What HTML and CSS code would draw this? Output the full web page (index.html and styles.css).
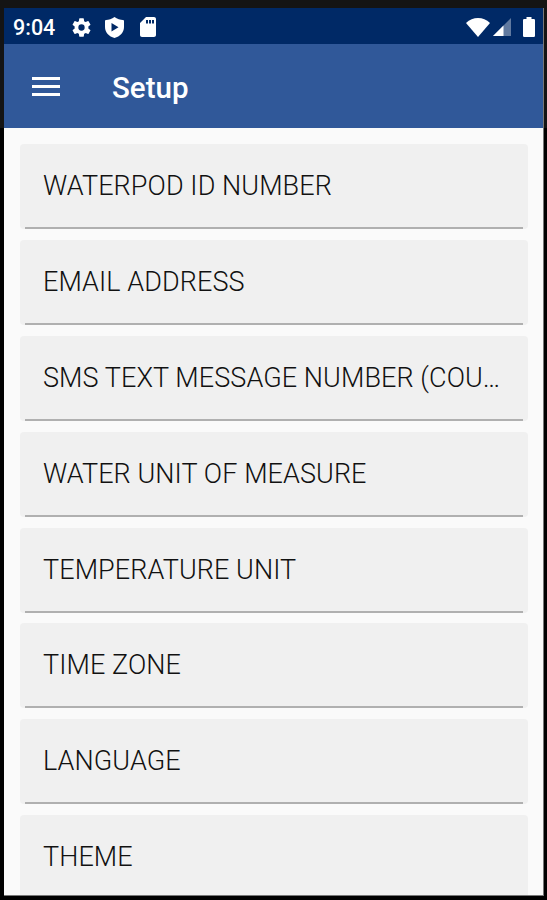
FILE: index.html
```
<!DOCTYPE html>
<html lang="en">
<head>
    <meta charset="UTF-8">
    <meta name="viewport" content="width=device-width, initial-scale=1.0">
    <title>Setup</title>
    <link rel="stylesheet" href="styles.css">
</head>
<body>
    <div class="screen">
        <!-- Status Bar -->
        <div class="status-bar">
            <span class="clock">9:04</span>
            <svg class="icon settings" viewBox="0 0 24 24"><path fill-rule="evenodd" d="M19.14 12.94c.04-.3.06-.61.06-.94s-.02-.64-.07-.94l2.03-1.58a.49.49 0 0 0 .12-.61l-1.92-3.32a.49.49 0 0 0-.59-.22l-2.39.96a7 7 0 0 0-1.62-.94l-.36-2.54a.48.48 0 0 0-.48-.41h-3.84a.48.48 0 0 0-.47.41l-.36 2.54c-.59.24-1.13.57-1.62.94l-2.39-.96a.48.48 0 0 0-.59.22L2.74 8.87a.48.48 0 0 0 .12.61l2.03 1.58a6 6 0 0 0 0 1.88l-2.03 1.58a.49.49 0 0 0-.12.61l1.92 3.32c.12.22.37.29.59.22l2.39-.96c.5.38 1.03.7 1.62.94l.36 2.54c.05.24.24.41.48.41h3.84c.24 0 .44-.17.47-.41l.36-2.54a7 7 0 0 0 1.62-.94l2.39.96c.22.08.47 0 .59-.22l1.92-3.32a.48.48 0 0 0-.12-.61zM12 15.3a3.3 3.3 0 1 1 0-6.6 3.3 3.3 0 0 1 0 6.6z"/></svg>
            <svg class="icon shield" viewBox="0 0 19 21"><path fill-rule="evenodd" d="M9.5 0C7 2 3.500 3 1 3Q0 3 0 4V10C0 15.500 4 19.500 9.500 21C15 19.500 19 15.500 19 10V4Q19 3 18 3C15.500 3 12 2 9.500 0zM6.500 6V14.500L13.500 10.300z"/></svg>
            <svg class="icon sd-card" viewBox="0 0 16 20"><path fill-rule="evenodd" d="M14 0H6L0 6v12c0 1.100.9 2 2 2h12c1.100 0 2-.9 2-2V2c0-1.100-.9-2-2-2zM6 3h2v3.500H6zm3 0h2v3.500H9zm3 0h2v3.500h-2z"/></svg>
            <div class="status-right">
                <svg class="icon wifi" viewBox="0 0 24 19"><path d="M12 19L0 5C3.500 1.700 7.500 0 12 0s8.500 1.700 12 5z"/></svg>
                <svg class="icon signal" viewBox="0 0 18 18"><path d="M18 0v18H0z" opacity=".38"/><path d="M10.500 7.500V18H0z"/></svg>
                <svg class="icon battery" viewBox="0 0 12 20"><path d="M10.800 2H8.500V0h-5v2H1.200Q0 2 0 3.200v15.600Q0 20 1.200 20h9.600q1.200 0 1.200-1.200V3.200Q12 2 10.800 2z"/></svg>
            </div>
        </div>

        <!-- App Bar -->
        <header class="app-bar">
            <div class="menu">
                <span></span>
                <span></span>
                <span></span>
            </div>
            <h1>Setup</h1>
        </header>

        <!-- Settings List -->
        <div class="list">
            <div class="item"><p>WATERPOD ID NUMBER</p></div>
            <div class="item"><p>EMAIL ADDRESS</p></div>
            <div class="item"><p>SMS TEXT MESSAGE NUMBER (COU…</p></div>
            <div class="item"><p>WATER UNIT OF MEASURE</p></div>
            <div class="item"><p>TEMPERATURE UNIT</p></div>
            <div class="item"><p>TIME ZONE</p></div>
            <div class="item"><p>LANGUAGE</p></div>
            <div class="item"><p>THEME</p></div>
        </div>
    </div>
</body>
</html>
```
FILE: styles.css
```
/* General Reset */
* {
    box-sizing: border-box;
}

body {
    margin: 0;
    height: 100vh;
    padding: 8px 3px 4px 4px;
    font-family: Roboto, sans-serif;
    background: linear-gradient(#141414 128px, #000 128px);
    overflow: hidden;
}

.screen {
    display: flex;
    flex-direction: column;
    height: 100%;
    background: #fafafa;
    border-right: 1px solid #777;
    border-bottom: 1px solid #777;
    overflow: hidden;
}

/* Status Bar */
.status-bar {
    display: flex;
    align-items: center;
    flex: 0 0 36px;
    padding: 2px 8px 0 9px;
    background: #002966;
    color: #fff;
}

.clock {
    width: 57px;
    padding-top: 1px;
    font-size: 21.5px;
    font-weight: 500;
    line-height: 33px;
}

.icon {
    display: block;
    fill: #fff;
}

.settings {
    width: 23px;
    height: 23px;
}

.shield {
    width: 19px;
    height: 21px;
    margin-left: 12px;
}

.sd-card {
    width: 16px;
    height: 20px;
    margin-left: 16px;
}

.status-right {
    display: flex;
    align-items: center;
    margin-left: auto;
}

.wifi {
    width: 24px;
    height: 19px;
}

.signal {
    width: 18px;
    height: 18px;
    margin-left: 3px;
}

.battery {
    width: 12px;
    height: 20px;
    margin-left: 12px;
}

/* App Bar */
.app-bar {
    display: flex;
    align-items: center;
    flex: 0 0 84px;
    padding-left: 28px;
    background: #305899;
    color: #fff;
}

.menu {
    display: flex;
    flex-direction: column;
    gap: 5px;
    width: 28px;
}

.menu span {
    height: 3px;
    background: #fff;
}

h1 {
    margin: 4px 0 0 52px;
    font-size: 29.5px;
    font-weight: 500;
    line-height: 36px;
}

/* Settings List */
.list {
    display: flex;
    flex-direction: column;
    gap: 10.9px;
    padding: 16px 15px 0 16px;
}

.item {
    display: flex;
    flex-direction: column;
    justify-content: space-between;
    flex: 0 0 85px;
    padding: 0 5px;
    background: #f0f0f0;
    border-radius: 4px;
}

.item::after {
    content: "";
    height: 2px;
    background: #b0b0b0;
}

.item p {
    margin: 0;
    padding: 2px 0 0 18px;
    font-size: 27px;
    font-weight: 300;
    line-height: 81px;
    letter-spacing: 0.08px;
    color: #111;
    white-space: nowrap;
}
```
